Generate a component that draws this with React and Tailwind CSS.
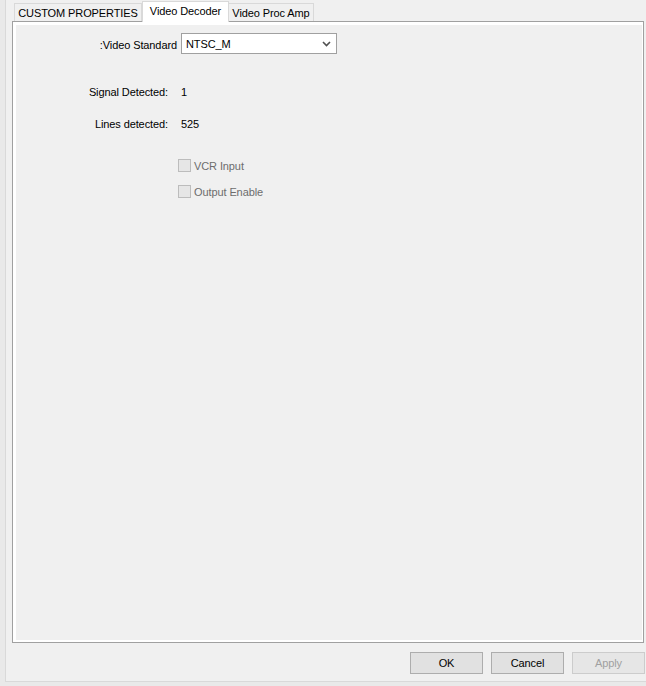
import React from "react";

const font = { fontFamily: '"Liberation Sans", Arial, sans-serif' };

function Chevron() {
  return (
    <svg width="9" height="6" viewBox="0 0 9 6" className="text-[#505050]">
      <path d="M1 1 L4.5 4.5 L8 1" fill="none" stroke="currentColor" strokeWidth="1.6" />
    </svg>
  );
}

function Check({ label }) {
  return (
    <div className="flex items-center h-[13px] ml-[162px]">
      <div className="w-[13px] h-[13px] border border-[#bcbcbc] bg-[#e6e6e6]" />
      <span className="ml-[3px] pt-[1px] text-[#6d6d6d] leading-none">{label}</span>
    </div>
  );
}

function Button({ children, disabled }) {
  return (
    <div
      className={
        "w-[73px] h-[22px] flex items-center justify-center border " +
        (disabled
          ? "border-[#cccccc] bg-[#e6e6e6] text-[#a0a0a0]"
          : "border-[#adadad] bg-[#e1e1e1] text-black")
      }
    >
      {children}
    </div>
  );
}

export default function App() {
  return (
    <div className="w-[646px] h-[686px] bg-[#e9e9e9] text-[11px] tracking-[-0.1px] text-black overflow-hidden" style={font}>
      <div className="ml-[5px] h-[682px] border-l border-b border-[#d9d9d9] bg-[#f0f0f0]">
        {/* tabs */}
        <div className="flex items-end h-[21px] pl-[8px]">
          <div className="w-[128px] h-[18px] border-t border-l border-r border-[#d9d9d9] bg-[#f0f0f0] flex items-center justify-center pt-[1px]">
            CUSTOM PROPERTIES
          </div>
          <div className="relative z-10 w-[87px] h-[21px] -mb-px border-t border-l border-r border-[#d9d9d9] bg-white flex items-center justify-center pb-[2px]">
            Video Decoder
          </div>
          <div className="w-[85px] h-[18px] border-t border-r border-[#d9d9d9] bg-[#f0f0f0] flex items-center justify-center pt-[1px]">
            Video Proc Amp
          </div>
        </div>

        {/* panel */}
        <div className="ml-[6px] w-[632px] h-[622px] border border-[#a0a0a0] bg-white pl-[3px] pt-[3px] pr-[1px] pb-[2px]">
          <div className="w-full h-full bg-[#f0f0f0] pt-[8px]">
            <div className="flex items-center h-[21px]">
              <div className="w-[161px] text-right pt-[3px]">:Video Standard</div>
              <div className="ml-[4px] w-[156px] h-[21px] border border-[#a0a0a0] bg-white flex items-center pl-[4px] pr-[5px]">
                <span className="flex-1 pt-[1px]">NTSC_M</span>
                <Chevron />
              </div>
            </div>

            <div className="flex items-center h-[14px] mt-[31px]">
              <div className="w-[152px] text-right">Signal Detected:</div>
              <div className="ml-[13px]">1</div>
            </div>

            <div className="flex items-center h-[14px] mt-[18px]">
              <div className="w-[152px] text-right">Lines detected:</div>
              <div className="ml-[13px]">525</div>
            </div>

            <div className="mt-[28px]">
              <Check label="VCR Input" />
            </div>
            <div className="mt-[13px]">
              <Check label="Output Enable" />
            </div>
          </div>
        </div>

        {/* footer */}
        <div className="flex justify-end gap-[8px] mt-[9px] pr-[1px]">
          <Button>OK</Button>
          <Button>Cancel</Button>
          <Button disabled>Apply</Button>
        </div>
      </div>
    </div>
  );
}
